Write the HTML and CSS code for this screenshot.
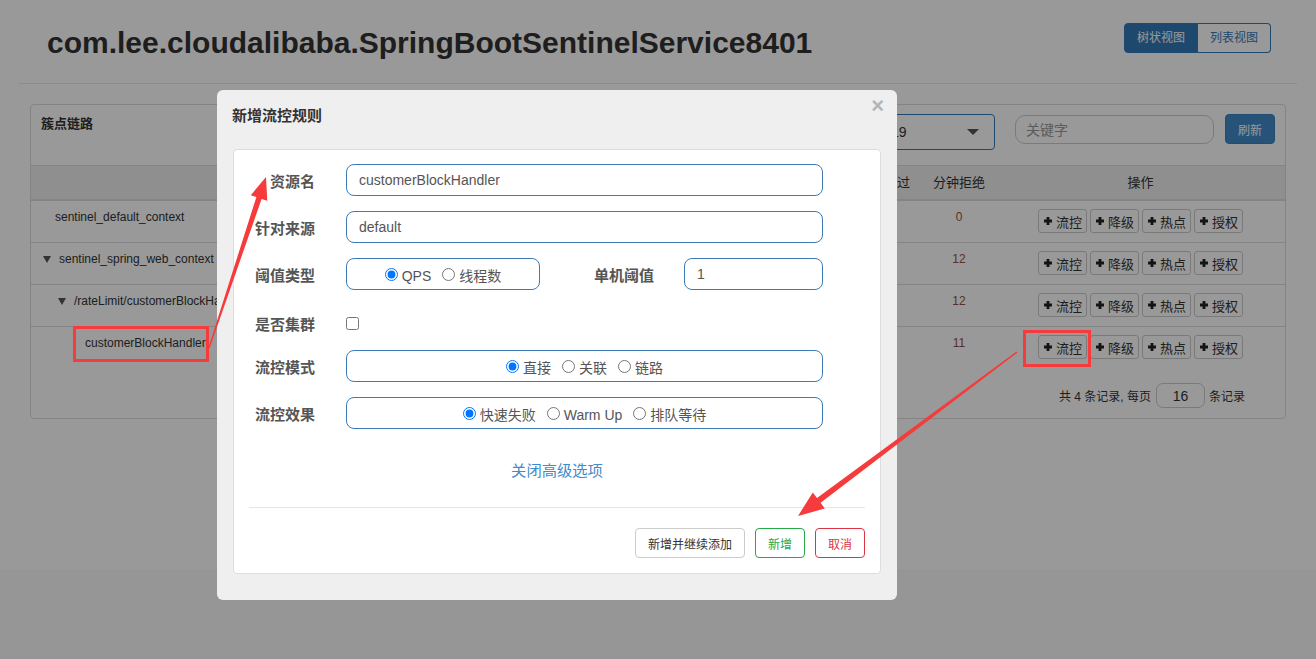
FILE: index.html
```html
<!DOCTYPE html>
<html lang="zh">
<head>
<meta charset="utf-8">
<title>Sentinel</title>
<link rel="stylesheet" href="styles.css">
</head>
<body>
<div class="page">
  <header class="top">
    <h1 class="title">com.lee.cloudalibaba.SpringBootSentinelService8401</h1>
    <div class="view-toggle">
      <button class="vt active">树状视图</button><button class="vt">列表视图</button>
    </div>
  </header>

  <section class="panel">
    <div class="panel-head">
      <div class="panel-title">簇点链路</div>
      <div class="tools">
        <div class="select"><span class="sel-text">192.168.0.103:8719</span><i class="caret"></i></div>
        <input class="search" placeholder="关键字">
        <button class="btn-refresh">刷新</button>
      </div>
    </div>

    <div class="grid thead">
      <div class="th"></div>
      <div class="th">通过QPS</div>
      <div class="th">拒绝QPS</div>
      <div class="th">并发数</div>
      <div class="th">平均RT</div>
      <div class="th">分钟通过</div>
      <div class="th">分钟拒绝</div>
      <div class="th">操作</div>
    </div>

    <div class="grid trow first">
      <div class="td name lv0-leaf">sentinel_default_context</div>
      <div class="td num">0</div><div class="td num">0</div><div class="td num">0</div><div class="td num">0</div>
      <div class="td num">0</div>
      <div class="td num blk">0</div>
      <div class="td acts">
        <button class="op"><svg class="plus" viewBox="0 0 10 10"><path d="M5 1V9M1 5H9"/></svg>流控</button>
        <button class="op"><svg class="plus" viewBox="0 0 10 10"><path d="M5 1V9M1 5H9"/></svg>降级</button>
        <button class="op"><svg class="plus" viewBox="0 0 10 10"><path d="M5 1V9M1 5H9"/></svg>热点</button>
        <button class="op"><svg class="plus" viewBox="0 0 10 10"><path d="M5 1V9M1 5H9"/></svg>授权</button>
      </div>
    </div>

    <div class="grid trow">
      <div class="td name lv0"><i class="tri"></i>sentinel_spring_web_context</div>
      <div class="td num">0</div><div class="td num">0</div><div class="td num">0</div><div class="td num">0</div>
      <div class="td num">3</div>
      <div class="td num blk">12</div>
      <div class="td acts">
        <button class="op"><svg class="plus" viewBox="0 0 10 10"><path d="M5 1V9M1 5H9"/></svg>流控</button>
        <button class="op"><svg class="plus" viewBox="0 0 10 10"><path d="M5 1V9M1 5H9"/></svg>降级</button>
        <button class="op"><svg class="plus" viewBox="0 0 10 10"><path d="M5 1V9M1 5H9"/></svg>热点</button>
        <button class="op"><svg class="plus" viewBox="0 0 10 10"><path d="M5 1V9M1 5H9"/></svg>授权</button>
      </div>
    </div>

    <div class="grid trow">
      <div class="td name lv1"><i class="tri"></i>/rateLimit/customerBlockHandler</div>
      <div class="td num">0</div><div class="td num">0</div><div class="td num">0</div><div class="td num">0</div>
      <div class="td num">3</div>
      <div class="td num blk">12</div>
      <div class="td acts">
        <button class="op"><svg class="plus" viewBox="0 0 10 10"><path d="M5 1V9M1 5H9"/></svg>流控</button>
        <button class="op"><svg class="plus" viewBox="0 0 10 10"><path d="M5 1V9M1 5H9"/></svg>降级</button>
        <button class="op"><svg class="plus" viewBox="0 0 10 10"><path d="M5 1V9M1 5H9"/></svg>热点</button>
        <button class="op"><svg class="plus" viewBox="0 0 10 10"><path d="M5 1V9M1 5H9"/></svg>授权</button>
      </div>
    </div>

    <div class="grid trow">
      <div class="td name lv2-leaf">customerBlockHandler</div>
      <div class="td num">0</div><div class="td num">0</div><div class="td num">0</div><div class="td num">0</div>
      <div class="td num">3</div>
      <div class="td num blk">11</div>
      <div class="td acts">
        <button class="op"><svg class="plus" viewBox="0 0 10 10"><path d="M5 1V9M1 5H9"/></svg>流控</button>
        <button class="op"><svg class="plus" viewBox="0 0 10 10"><path d="M5 1V9M1 5H9"/></svg>降级</button>
        <button class="op"><svg class="plus" viewBox="0 0 10 10"><path d="M5 1V9M1 5H9"/></svg>热点</button>
        <button class="op"><svg class="plus" viewBox="0 0 10 10"><path d="M5 1V9M1 5H9"/></svg>授权</button>
      </div>
    </div>

    <div class="pager">
      <span>共 4 条记录, 每页</span>
      <input class="page-size" value="16">
      <span>条记录</span>
    </div>
  </section>
</div>

<div class="backdrop"></div>

<div class="modal">
  <div class="modal-head">
    <h4 class="modal-title">新增流控规则</h4>
    <span class="close">×</span>
  </div>
  <div class="card">
    <div class="frow">
      <label class="lbl">资源名</label>
      <input class="ctl wide" value="customerBlockHandler">
    </div>
    <div class="frow">
      <label class="lbl">针对来源</label>
      <input class="ctl wide" value="default">
    </div>
    <div class="frow">
      <label class="lbl">阈值类型</label>
      <div class="ctl box narrow">
        <label class="opt"><input type="radio" name="grade" checked>QPS</label>
        <label class="opt"><input type="radio" name="grade">线程数</label>
      </div>
      <label class="lbl2">单机阈值</label>
      <input class="ctl small" value="1">
    </div>
    <div class="frow check-row">
      <label class="lbl">是否集群</label>
      <input type="checkbox" class="chk">
    </div>
    <div class="frow">
      <label class="lbl">流控模式</label>
      <div class="ctl box wide">
        <label class="opt"><input type="radio" name="mode" checked>直接</label>
        <label class="opt"><input type="radio" name="mode">关联</label>
        <label class="opt"><input type="radio" name="mode">链路</label>
      </div>
    </div>
    <div class="frow last">
      <label class="lbl">流控效果</label>
      <div class="ctl box wide">
        <label class="opt"><input type="radio" name="effect" checked>快速失败</label>
        <label class="opt"><input type="radio" name="effect">Warm Up</label>
        <label class="opt"><input type="radio" name="effect">排队等待</label>
      </div>
    </div>
    <div class="adv"><a class="adv-link">关闭高级选项</a></div>
    <hr class="sep">
    <div class="foot">
      <button class="fbtn">新增并继续添加</button>
      <button class="fbtn ok">新增</button>
      <button class="fbtn cancel">取消</button>
    </div>
  </div>
</div>

<svg class="annot" width="1316" height="659" viewBox="0 0 1316 659">
  <rect x="74.5" y="327.5" width="133" height="33" fill="none" stroke="#f53b3b" stroke-width="3"/>
  <rect x="1024.5" y="331.5" width="65" height="34" fill="none" stroke="#f53b3b" stroke-width="3"/>
  <polygon fill="#f53b3b" points="208.4,347.8 209.6,348.2 261.6,198.9 267.3,200.8 266,177 250.8,195.2 256.4,197.1"/>
  <polygon fill="#f53b3b" points="1016.5,351.4 1017.5,352.6 820.6,502.8 824.8,508.4 798,516 812.8,492.4 817.0,498.0"/>
</svg>
</body>
</html>
```

FILE: styles.css
```css
* { box-sizing: border-box; }

html, body {
  margin: 0;
  background: #fafafa;
}

body {
  width: 1316px;
  height: 659px;
  overflow: hidden;
  position: relative;
  font-family: "Liberation Sans", "Noto Sans CJK SC", sans-serif;
  color: #333;
}

button, input {
  font-family: "Liberation Sans", "Noto Sans CJK SC", sans-serif;
}

/* ---------- page under the backdrop ---------- */
.page {
  background: #fff;
  height: 569px;
  padding: 0 19px;
}

.top {
  height: 84px;
  border-bottom: 1px solid #e8e8e8;
  display: flex;
  justify-content: space-between;
  align-items: flex-start;
  padding: 0 26px 0 28px;
}

.title {
  margin: 26px 0 0;
  font-size: 30px;
  line-height: 34px;
  font-weight: bold;
  color: #333;
}

.view-toggle {
  display: flex;
  margin-top: 23px;
}

.vt {
  height: 30px;
  padding: 0 12px;
  font-size: 12px;
  line-height: 28px;
  border: 1px solid #337ab7;
  background: #fff;
  color: #337ab7;
  border-radius: 0 4px 4px 0;
  border-left: 0;
}

.vt.active {
  background: #337ab7;
  color: #fff;
  border-left: 1px solid #337ab7;
  border-radius: 4px 0 0 4px;
}

.panel {
  margin: 20px 11px 0;
  border: 1px solid #ddd;
  border-radius: 4px;
}

.panel-head {
  display: flex;
  justify-content: space-between;
  align-items: flex-start;
  padding: 9px 10px 15px 10px;
  border-bottom: 1px solid #ddd;
}

.panel-title {
  margin-top: 1px;
  font-size: 13px;
  line-height: 18px;
  font-weight: bold;
  color: #333;
}

.tools {
  display: flex;
  align-items: flex-start;
}

.select {
  width: 225px;
  height: 36px;
  border: 1px solid #337ab7;
  border-radius: 4px;
  padding-left: 11px;
  display: flex;
  align-items: center;
  justify-content: space-between;
  padding-right: 15px;
  font-size: 14px;
  color: #333;
}

.caret {
  width: 0;
  height: 0;
  border-left: 6px solid transparent;
  border-right: 6px solid transparent;
  border-top: 6px solid #555;
}

.search {
  margin: 1px 0 0 20px;
  width: 199px;
  height: 29px;
  border: 1px solid #ccc;
  border-radius: 10px;
  padding: 0 10px;
  font-size: 14px;
  color: #555;
  background: #fff;
}

.search::placeholder { color: #999; }

.btn-refresh {
  margin-left: 11px;
  width: 50px;
  height: 30px;
  border: 1px solid #3a7fc0;
  border-radius: 4px;
  background: #428bca;
  color: #fff;
  font-size: 12px;
  padding: 0;
}

/* table */
.grid {
  display: grid;
  grid-template-columns: 300px 129px 129px 129px 128px 76px 74px 1fr;
}

.thead {
  height: 35px;
  background: #efefef;
  border-bottom: 2px solid #ddd;
}

.th {
  text-align: center;
  font-size: 13px;
  line-height: 33px;
  color: #333;
}

.trow {
  height: 42px;
  border-top: 1px solid #ddd;
}

.trow.first {
  height: 41px;
  border-top: 0;
}

.td {
  padding-top: 6px;
  font-size: 12px;
  line-height: 20px;
  color: #333;
  white-space: nowrap;
}

.num { text-align: center; }

.blk { color: #9a4e44; }

.name { overflow: hidden; display: flex; align-items: flex-start; }
.lv0-leaf { padding-left: 24px; }
.lv0 { padding-left: 12px; }
.lv1 { padding-left: 27px; }
.lv2-leaf { padding-left: 54px; }

.tri {
  flex: none;
  width: 0;
  height: 0;
  margin: 7px 8px 0 0;
  border-left: 4px solid transparent;
  border-right: 4px solid transparent;
  border-top: 7px solid #555;
}

.acts {
  padding-top: 8px;
  display: flex;
  justify-content: center;
  align-items: flex-start;
  gap: 3px;
}

.op {
  width: 49px;
  height: 24px;
  padding: 0;
  border: 1px solid #ccc;
  border-radius: 3px;
  background: #fff;
  color: #333;
  font-size: 13px;
  display: flex;
  align-items: center;
  justify-content: center;
  gap: 3px;
}

.plus {
  width: 10px;
  height: 10px;
  stroke: #222;
  stroke-width: 2.8;
  fill: none;
}

.pager {
  display: flex;
  justify-content: flex-end;
  align-items: center;
  gap: 4px;
  padding: 15px 40px 10px 0;
  font-size: 12px;
  color: #333;
}

.page-size {
  width: 49px;
  height: 25px;
  margin-left: 1px;
  border: 1px solid #ccc;
  border-radius: 7px;
  text-align: center;
  font-size: 14px;
  color: #333;
  background: #fff;
}

/* ---------- backdrop & modal ---------- */
.backdrop {
  position: fixed;
  inset: 0;
  background: rgba(0, 0, 0, 0.4);
  z-index: 10;
}

.modal {
  position: absolute;
  left: 217px;
  top: 90px;
  width: 680px;
  height: 510px;
  background: #efefef;
  border-radius: 6px;
  padding: 0 16px;
  z-index: 20;
}

.modal-head {
  height: 59px;
  display: flex;
  justify-content: space-between;
  align-items: flex-start;
}

.modal-title {
  margin: 16px 0 0 -1px;
  font-size: 15px;
  line-height: 20px;
  font-weight: bold;
  color: #333;
}

.close {
  margin: 4px -3px 0 0;
  font-size: 22px;
  line-height: 24px;
  font-weight: bold;
  color: #b5b5b5;
}

.card {
  background: #fff;
  border: 1px solid #ddd;
  border-radius: 4px;
  padding: 14px 15px 15px;
}

.frow {
  display: flex;
  align-items: center;
  height: 32px;
  margin-bottom: 15px;
}

.frow.last {
  margin-bottom: 0;
}

.frow.check-row {
  height: 30px;
  padding-top: 6px;
}

.lbl {
  width: 66px;
  margin-right: 31px;
  text-align: right;
  font-size: 15px;
  font-weight: bold;
  color: #555;
  white-space: nowrap;
}

.lbl2 {
  width: 61px;
  margin: 0 30px 0 53px;
  text-align: right;
  font-size: 15px;
  font-weight: bold;
  color: #555;
  white-space: nowrap;
}

.ctl {
  height: 32px;
  border: 1px solid #3d7bb8;
  border-radius: 8px;
  padding: 0 12px;
  font-size: 14px;
  color: #555;
  background: #fff;
}

.ctl.wide { width: 477px; }
.ctl.narrow { width: 194px; }
.ctl.small { width: 139px; }

.box {
  display: flex;
  justify-content: center;
  align-items: center;
  padding: 0;
}

.opt {
  display: inline-flex;
  align-items: center;
  margin: 0 5.5px;
  padding-top: 4px;
  font-size: 14px;
  line-height: 20px;
  color: #555;
  white-space: nowrap;
}

.opt input {
  margin: 0 4px 4px 0;
  width: 13px;
  height: 13px;
}

.chk {
  margin: 0;
  width: 13px;
  height: 13px;
}

.adv {
  margin-top: 32px;
  text-align: center;
  line-height: 20px;
}

.adv-link {
  font-size: 15.3px;
  color: #428bca;
}

.sep {
  margin: 26px 0 20px;
  border: 0;
  border-top: 1px solid #e5e5e5;
}

.foot {
  display: flex;
  justify-content: flex-end;
  gap: 10px;
}

.fbtn {
  height: 30px;
  padding: 0 12px;
  font-size: 12px;
  border: 1px solid #ccc;
  border-radius: 4px;
  background: #fff;
  color: #333;
}

.fbtn.ok {
  border-color: #28a745;
  color: #28a745;
}

.fbtn.cancel {
  border-color: #dc3545;
  color: #dc3545;
}

.annot {
  position: absolute;
  left: 0;
  top: 0;
  z-index: 30;
  pointer-events: none;
}
```
